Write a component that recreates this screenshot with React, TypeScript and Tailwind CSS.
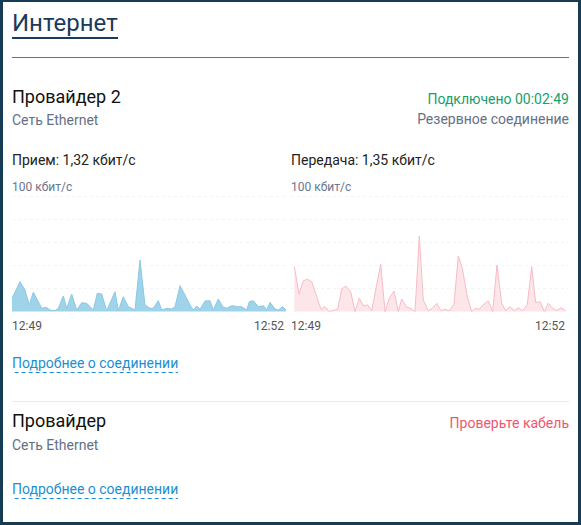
import React from "react";

const rx: [number, number][] = [
  [36,475],[60,425],[75,450],[88,495],[100,457],[115,485],[125,505],[138,502],[150,510],[165,512],[175,505],[190,468],[200,505],[215,462],[230,510],[245,488],[260,490],[280,510],[292,460],[305,462],[320,512],[345,455],[355,512],[370,470],[385,500],[405,510],[420,360],[435,495],[450,505],[460,505],[475,482],[485,510],[500,505],[515,507],[525,500],[540,437],[555,465],[570,495],[580,510],[590,498],[600,508],[615,483],[630,482],[640,510],[655,477],[668,500],[680,505],[695,497],[715,500],[725,500],[740,510],[748,485],[760,482],[775,500],[790,497],[800,510],[810,487],[825,507],[835,510],[848,500],[860,512],
];

const tx: [number, number][] = [
  [28,380],[42,462],[55,422],[68,418],[80,425],[95,470],[108,508],[120,500],[133,515],[148,510],[158,508],[170,447],[183,438],[197,455],[210,515],[223,475],[235,497],[248,495],[260,512],[287,372],[300,515],[313,475],[327,453],[340,515],[350,477],[365,502],[378,505],[390,515],[403,288],[415,480],[430,512],[442,505],[455,490],[468,512],[480,508],[493,512],[507,493],[520,348],[532,385],[547,470],[560,515],[572,505],[583,508],[597,492],[610,483],[623,515],[636,375],[650,490],[662,512],[675,500],[688,512],[700,503],[713,512],[727,493],[740,380],[752,488],[765,485],[778,515],[790,490],[803,505],[815,512],[828,503],[842,512],
];

const TOP = 195;

function Chart({
  pts,
  originX,
  colLeft,
  fill,
  stroke,
}: {
  pts: [number, number][];
  originX: number;
  colLeft: number;
  fill: string;
  stroke: string;
}) {
  const conv = pts.map(([zx, zy]) => [zx / 3 + originX - colLeft, zy / 3 + 140 - TOP]);
  const base = 116.5;
  const line = conv.map(([x, y]) => `${x.toFixed(1)},${Math.min(y, base).toFixed(1)}`).join(" ");
  const first = conv[0][0].toFixed(1);
  const last = conv[conv.length - 1][0].toFixed(1);
  const area = `${first},${base} ${line} ${last},${base}`;
  return (
    <svg width="100%" height="118" className="block">
      {[1.5, 24.5, 47.5, 70.5, 93.5].map((y) => (
        <line key={y} x1="0" x2="100%" y1={y} y2={y} stroke="#f4f4f4" strokeWidth="1" strokeDasharray="3 3" />
      ))}
      <polygon points={area} fill={fill} />
      <polyline points={line} fill="none" stroke={stroke} strokeWidth="1" />
    </svg>
  );
}

function Link() {
  return (
    <span className="inline-block pb-[1px] text-[14px] leading-[18px] text-[#1b8fd2] bg-[linear-gradient(to_right,#1b8fd2_4px,transparent_4px)] bg-[length:7px_1px] bg-repeat-x bg-bottom">
      Подробнее о соединении
    </span>
  );
}

export default function App() {
  return (
    <div
      className="w-[581px] h-[525px] bg-white border-x-[3px] border-b-[3px] border-t-2 border-[#163b55] px-[9px] text-[#222]"
      style={{ fontFamily: "Roboto, 'Liberation Sans', sans-serif" }}
    >
      <div className="pt-[7px]">
        <span className="inline-block text-[24px] leading-[28px] text-[#1b3a5a] border-b-2 border-[#1b3a5a]">
          Интернет
        </span>
      </div>
      <div className="mt-[18px] h-px bg-[#1b8ac6]" />

      <div className="mt-[27px] flex justify-between">
        <div>
          <div className="text-[18px] leading-[24px] text-[#111]">Провайдер&nbsp;2</div>
          <div className="mt-[1px] text-[14px] leading-[20px] text-[#667085]">Сеть Ethernet</div>
        </div>
        <div className="text-right pt-[4px]">
          <div className="text-[14px] leading-[20px] text-[#16a06c]">Подключено 00:02:49</div>
          <div className="text-[14px] leading-[20px] text-[#667085]">Резервное соединение</div>
        </div>
      </div>

      <div className="mt-[20px] grid grid-cols-[274px_278px] gap-[5px]">
        <div>
          <div className="text-[14px] leading-[20px] text-[#222]">Прием: 1,32 кбит/с</div>
          <div className="mt-[9px] text-[12px] leading-[16px] text-[#6b7590]">100 кбит/с</div>
          <Chart pts={rx} originX={0} colLeft={12} fill="#9fd3ea" stroke="#8cc8e4" />
          <div className="mt-[5px] flex justify-between text-[12px] leading-[16px] text-[#555] pr-[2px]">
            <span>12:49</span>
            <span>12:52</span>
          </div>
        </div>
        <div>
          <div className="text-[14px] leading-[20px] text-[#222]">Передача: 1,35 кбит/с</div>
          <div className="mt-[9px] text-[12px] leading-[16px] text-[#6b7590]">100 кбит/с</div>
          <Chart pts={tx} originX={285} colLeft={291} fill="#fde6e9" stroke="#f8bcc3" />
          <div className="mt-[5px] flex justify-between text-[12px] leading-[16px] text-[#555] pr-[4px]">
            <span>12:49</span>
            <span>12:52</span>
          </div>
        </div>
      </div>

      <div className="mt-[17px]">
        <Link />
      </div>

      <div className="mt-[26px] h-px bg-[#ebebeb]" />

      <div className="mt-[7px] flex justify-between items-start">
        <div>
          <div className="text-[18px] leading-[24px] text-[#111]">Провайдер</div>
          <div className="mt-[2px] text-[14px] leading-[20px] text-[#667085]">Сеть Ethernet</div>
        </div>
        <div className="pt-[4px] text-[14px] leading-[20px] text-[#f0566f]">Проверьте кабель</div>
      </div>

      <div className="mt-[22px]">
        <Link />
      </div>
    </div>
  );
}
